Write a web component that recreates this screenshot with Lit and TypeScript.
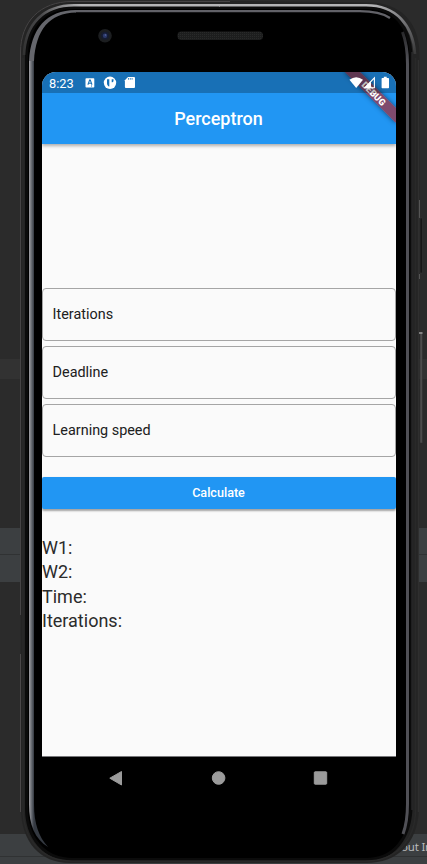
import { LitElement, html, css } from "lit";
import { customElement } from "lit/decorators.js";

@customElement("status-bar")
class StatusBar extends LitElement {
  static styles = css`
    :host { display: flex; align-items: center; height: 21px; box-sizing: border-box; background: rgba(0,0,0,.25); color: #fff; padding: 0 6.500px 0 7px; }
    .time { font-size: 12.8px; line-height: 21px; width: 35.5px; padding-top: 1px; }
    svg { display: block; flex: none; }
    .spacer { flex: 1; }
  `;
  render() {
    return html`
      <span class="time">8:23</span>
      <svg width="39" height="21" viewBox="0 0 39 21">
        <rect x="0.5" y="6.3" width="8.8" height="9.2" rx="0.8" fill="#fff" />
        <path d="M2.900 12.700 4.600 8h.7L7 12.700M3.600 11.300h2.700M6 14h1" fill="none" stroke="#1571b8" stroke-width="1.05" />
        <circle cx="25" cy="10.800" r="6.200" fill="#fff" />
        <path d="M22 7.300h2.300v7.300c-1.400-.5-2.300-1.800-2.300-3.400zM26.700 7.300h1.800v1.400a1.600 1.600 0 0 1-1.800 1.500z" fill="#1571b8" />
      </svg>
      <svg width="12" height="21" viewBox="0 0 12 21">
        <path d="M4.300 5.100h6q1 0 1 1v9q0 1-1 1H2.200q-1 0-1-1V8.200z" transform="translate(-.3 0)" fill="#fff" />
        <path d="M4.500 6v1.700M6.300 6v1.700M8.100 6v1.700" stroke="#1571b8" stroke-width=".8" />
      </svg>
      <span class="spacer"></span>
      <svg width="41" height="21" viewBox="0 0 41 21">
        <path d="M.4 7.800Q7.200 2.600 14 7.800L7.200 16z" fill="#fff" />
        <path d="M25.400 5.900V15.800H15.800z" fill="none" stroke="#fff" stroke-width="1.100" />
        <path d="M22 9.400V16.300H15z" fill="#fff" />
        <path d="M34.800 4.700h2.900v1.300h1.600q.7 0 .7.700v8.800q0 .7-.7.700h-6q-.7 0-.7-.7V6.700q0-.7.7-.7h1.500z" fill="#fff" />
      </svg>
    `;
  }
}

@customElement("phone-frame")
class PhoneFrame extends LitElement {
  static styles = css`
    :host, svg { display: block; }
  `;
  render() {
    return html`<svg width="427" height="864" viewBox="0 0 427 864">
      <defs>
        <linearGradient id="silver" x1="28" x2="34" y1="0" y2="0" gradientUnits="userSpaceOnUse">
          <stop offset="0" stop-color="#626266" /><stop offset=".25" stop-color="#96969b" />
          <stop offset=".6" stop-color="#666a71" /><stop offset="1" stop-color="#343941" />
        </linearGradient>
        <linearGradient id="topL" x1="24" y1="60" x2="80" y2="4" gradientUnits="userSpaceOnUse">
          <stop offset="0" stop-color="#303030" /><stop offset=".55" stop-color="#48484a" /><stop offset="1" stop-color="#b4b4b6" />
        </linearGradient>
        <linearGradient id="topR" x1="415" y1="60" x2="370" y2="8" gradientUnits="userSpaceOnUse">
          <stop offset="0" stop-color="#303030" /><stop offset=".55" stop-color="#77777a" /><stop offset="1" stop-color="#b4b4b6" />
        </linearGradient>
        <linearGradient id="fade" x1="0" x2="0" y1="30" y2="60" gradientUnits="userSpaceOnUse">
          <stop offset="0" stop-color="#252527" /><stop offset="1" stop-color="#505056" />
        </linearGradient>
        <pattern id="mesh" width="2" height="2" patternUnits="userSpaceOnUse">
          <rect width="2" height="2" fill="#1d1e1e" /><rect width="1" height="1" fill="#292a2a" />
        </pattern>
      </defs>
      <path d="M20 52C20 22 40 1.500 72 1H228L370 2.500C400 3 419.500 22 419.500 54L418.700 812C417 843 398 863 366 863H70C40 863 21 842 21 808Z" fill="#242424" />
      <path d="M20.500 615V52C20.500 22 40 1.500 72 1.500H230" fill="none" stroke="#464445" />
      <path d="M20.500 654V812" fill="none" stroke="#4b4849" />
      <path d="M418.300 60V812" fill="none" stroke="#333" />
      <path d="M26.500 56C27 26 44 7.500 74 7.500H366C394 7.500 410 26 411 56V808C410 838 394 859.500 366 859.500H73C44 859.500 26.500 838 26.500 808Z" fill="#000" stroke="#0b0b0b" stroke-width="3" />
      <path d="M23 58V808C23 840 42 861 72 861H366C396 861 415.500 840 415.500 810V58" fill="none" stroke="#292929" stroke-width="1.500" />
      <path d="M24 55C25 24 44 5.300 74 5.300H220" fill="none" stroke="url(#topL)" stroke-width="2.600" />
      <path d="M219 5.300H366C396 5.300 413 25 415 54" fill="none" stroke="url(#topR)" stroke-width="2.600" />
      <path d="M412 52V810" fill="none" stroke="#353537" />
      <rect x="29" y="60" width="5" height="745" fill="url(#silver)" />
      <path d="M29 61C31 29 46 10 76 10V12.500C49 13 36 30 34 61Z" fill="#65666c" />
      <path d="M29 804C29 825 35 839 48 847C39 837 34 824 34 804Z" fill="url(#silver)" />
      <path d="M75 11.200H358C371 11 381 12 390 18" fill="none" stroke="#626268" stroke-width="2.300" />
      <path d="M402.500 32C406 41 407.500 50 407.500 64V804C407.500 817 406 826 403 834" fill="none" stroke="url(#fade)" stroke-width="3" />
      <circle cx="105" cy="35.800" r="6.800" fill="#1c1e20" />
      <circle cx="105" cy="35.800" r="4" fill="#161c31" />
      <circle cx="105" cy="35.800" r="2.200" fill="#2b3969" />
      <circle cx="105.500" cy="35" r=".8" fill="#5967a2" />
      <rect x="177.500" y="31.500" width="85.500" height="8.500" rx="4" fill="url(#mesh)" />
      <path d="M419.500 200V218M419.500 274V279" stroke="#555" />
      <rect x="420" y="218" width="2.500" height="55" fill="#171717" stroke="#393939" stroke-width=".5" />
      <rect x="420" y="332" width="2.500" height="111" fill="#4c4c4c" stroke="#2d2d2d" stroke-width=".5" />
      <path d="M419 333H422.500" stroke="#999" stroke-width="1.500" />
    </svg>`;
  }
}

@customElement("app-root")
class AppRoot extends LitElement {
  static styles = css`
    :host { display: block; font-family: Roboto, sans-serif; }
    .desk { position: relative; width: 427px; height: 864px; overflow: hidden; box-sizing: border-box; padding: 72px 31px 0 42px; background: #2b2b2b; }
    .backdrop { position: absolute; inset: 0; display: grid; grid-template-rows: 359px 20px 149px 26px 1px 27px 252px 22px 1px 7px; }
    .hl { background: #323232; }
    .row { background: #3c3f41; }
    .rule { background: #303233; }
    .tool { background: #3c3f41; color: #b8babc; font: 11.500px/25px "Noto Sans", sans-serif; letter-spacing: -.2px; padding-left: 401px; white-space: nowrap; }
    .frame { position: absolute; inset: 0; }
    .screen { position: relative; height: 685px; width: 354px; overflow: hidden; background: #fafafa; border-radius: 14px 14px 0 0; box-sizing: border-box; border-bottom: 1px solid #77777a; }
    .top { background: #2196f3; box-shadow: 0 2px 3px rgba(0,0,0,.3); }
    .status { position: relative; z-index: 2; }
    .title { height: 50.500px; color: #fff; font-size: 18px; font-weight: 500; line-height: 52px; text-align: center; text-indent: -1px; }
    .form { padding-top: 144.500px; display: flex; flex-direction: column; gap: 4.500px; }
    .field { height: 53.300px; box-sizing: border-box; border: 1px solid #a5a5a5; border-radius: 4px; padding-left: 9.600px; font-size: 14.400px; line-height: 51px; color: #202020; }
    .button { margin-top: 20px; height: 32.500px; background: #2196f3; color: #fff; border-radius: 2px; font-size: 12.600px; font-weight: 500; line-height: 32px; text-align: center; text-indent: -1px; box-shadow: 0 1.500px 2px rgba(0,0,0,.35); }
    .results { padding-top: 26.600px; font-size: 18px; line-height: 24.400px; color: #2b2b2b; }
    .banner { position: absolute; z-index: 1; left: 296.400px; top: 16.200px; width: 72px; height: 10.800px; transform: rotate(45deg); background: rgba(183,28,28,.627); box-shadow: 0 0 5px rgba(0,0,0,.5); color: #fff; font-size: 9.200px; font-weight: 900; line-height: 11px; text-align: center; }
    .nav { position: relative; display: flex; height: 43px; }
    .nav svg { display: block; }
  `;
  render() {
    return html`<div class="desk">
      <div class="backdrop">
        <div></div><div class="hl"></div><div></div>
        <div class="row"></div><div class="rule"></div><div class="row"></div><div></div>
        <div class="tool">out In</div><div class="rule"></div><div class="row"></div>
      </div>
      <phone-frame class="frame"></phone-frame>
      <div class="screen">
        <div class="top">
          <status-bar class="status"></status-bar>
          <div class="title">Perceptron</div>
        </div>
        <div class="form">
          ${["Iterations", "Deadline", "Learning speed"].map((t) => html`<div class="field">${t}</div>`)}
        </div>
        <div class="button">Calculate</div>
        <div class="results">
          ${["W1:", "W2:", "Time:", "Iterations:"].map((t) => html`<div>${t}</div>`)}
        </div>
        <div class="banner">DEBUG</div>
      </div>
      <div class="nav">
        <svg width="354" height="43" viewBox="0 0 354 43">
          <g fill="#9b9b9b" stroke="#9b9b9b" stroke-linejoin="round">
            <path d="M67.800 21.200 79.500 14.500V28Z" />
            <circle cx="176.600" cy="21" r="6.300" />
            <rect x="272.300" y="14.800" width="12.400" height="12.400" rx=".8" />
          </g>
        </svg>
      </div>
    </div>`;
  }
}
